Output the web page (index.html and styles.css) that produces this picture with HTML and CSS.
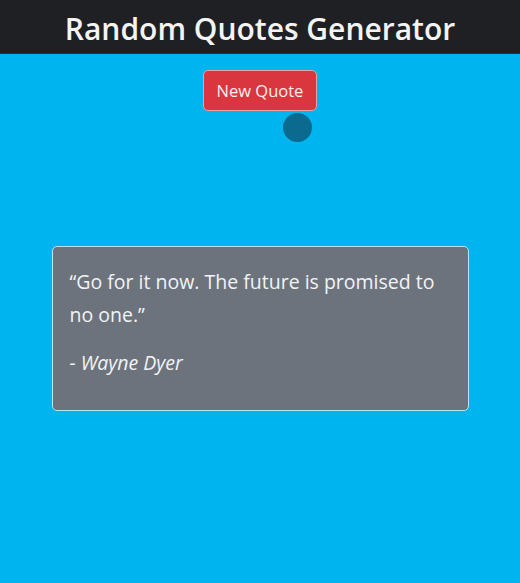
FILE: index.html
```html
<!DOCTYPE html>
<html>
<head>
<meta charset="utf-8">
<link rel="stylesheet" href="styles.css">
</head>
<body>
<header class="topbar"><h1 class="title">Random Quotes Generator</h1></header>
<main class="content">
  <div class="btn-wrap">
    <button class="btn-new">New Quote</button>
    <span class="cursor-dot"></span>
  </div>
  <div class="card">
    <p class="quote">“Go for it now. The future is promised to no one.”</p>
    <p class="author">- Wayne Dyer</p>
  </div>
</main>
</body>
</html>
```

FILE: styles.css
```css
html, body {
  margin: 0;
  padding: 0;
  height: 100%;
}
body {
  background: #00b5ef;
  font-family: "Open Sans", "Noto Sans", sans-serif;
  color: #fff;
}
.topbar {
  background: #1f2023;
  height: 54px;
  display: flex;
  align-items: center;
  justify-content: center;
  border-bottom: 1px solid #0a3a4a;
  box-sizing: border-box;
  padding-top: 3px;
}
.title {
  margin: 0;
  font-size: 30px;
  font-weight: 600;
  color: #f4f4f4;
}
.content {
  display: flex;
  flex-direction: column;
  align-items: center;
}
.btn-wrap {
  position: relative;
  margin-top: 16px;
}
.btn-new {
  background: #d9363f;
  color: #fdf0f0;
  border: 1px solid #f0a0a4;
  border-radius: 5px;
  font-family: "Open Sans", "Noto Sans", sans-serif;
  font-size: 16.5px;
  width: 114px;
  height: 41px;
  padding: 0;
}
.cursor-dot {
  position: absolute;
  left: 80px;
  top: 43px;
  width: 29px;
  height: 29px;
  border-radius: 50%;
  background: #0a6a90;
}
.card {
  margin-top: 135px;
  width: 417px;
  height: 165px;
  box-sizing: border-box;
  background: #6c737d;
  border: 1px solid #b5e6f5;
  border-radius: 5px;
  padding: 18px 17px;
}
.quote {
  margin: 0;
  font-size: 19.5px;
  line-height: 33px;
  color: #f2f3f4;
}
.author {
  margin: 15px 0 0;
  font-size: 19.5px;
  font-style: italic;
  line-height: 33px;
  color: #f2f3f4;
}
```
